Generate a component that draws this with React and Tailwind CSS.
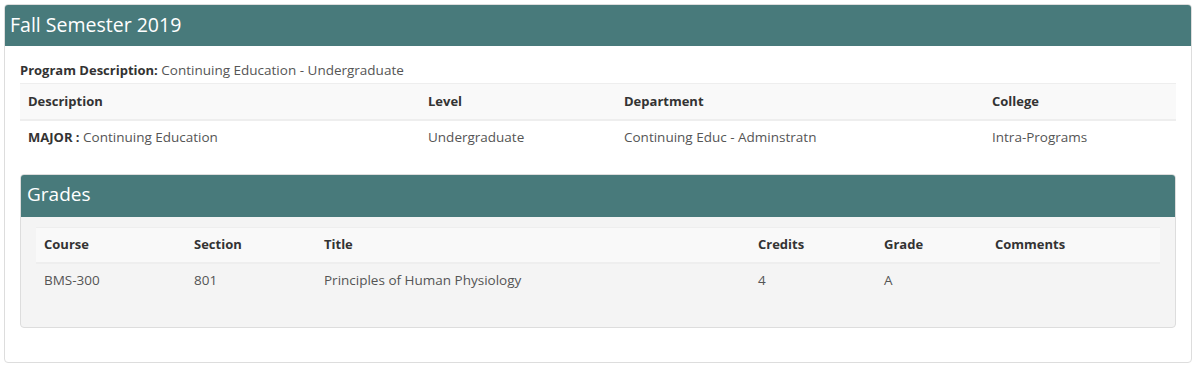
const programRows = [
  {
    description: "Continuing Education",
    level: "Undergraduate",
    department: "Continuing Educ - Adminstratn",
    college: "Intra-Programs",
  },
];

const grades = [
  {
    course: "BMS-300",
    section: "801",
    title: "Principles of Human Physiology",
    credits: "4",
    grade: "A",
    comments: "",
  },
];

const App = () => {
  return (
    <div className="bg-white pl-1 pr-2 pt-1 pb-1 font-['Open_Sans',sans-serif] text-[13.5px] text-[#555]">
      <div className="border border-[#ddd] rounded-[4px] overflow-hidden">
        <div className="bg-[#487a7b] h-[41px] flex items-center px-[5px] pb-[2px]">
          <h2 className="text-white text-[19.5px] leading-none">Fall Semester 2019</h2>
        </div>
        <div className="px-[15px] pt-[15px] pb-[34px]">
          <p className="leading-[18px] mb-[4px]">
            <span className="font-bold text-[13px] text-[#333]">Program Description:</span>{" "}
            Continuing Education - Undergraduate
          </p>
          <table className="w-full table-fixed border-collapse">
            <colgroup>
              <col className="w-[400px]" />
              <col className="w-[196px]" />
              <col className="w-[368px]" />
              <col />
            </colgroup>
            <thead>
              <tr className="bg-[#f9f9f9] border-t border-b-2 border-[#eee] h-[36px] text-left text-[13px]">
                <th className="px-2 font-bold text-[#333]">Description</th>
                <th className="px-2 font-bold text-[#333]">Level</th>
                <th className="px-2 font-bold text-[#333]">Department</th>
                <th className="px-2 font-bold text-[#333]">College</th>
              </tr>
            </thead>
            <tbody>
              {programRows.map((row) => (
                <tr key={row.description} className="h-[34px]">
                  <td className="px-2">
                    <span className="font-bold text-[13px] text-[#333]">MAJOR :</span> {row.description}
                  </td>
                  <td className="px-2">{row.level}</td>
                  <td className="px-2">{row.department}</td>
                  <td className="px-2">{row.college}</td>
                </tr>
              ))}
            </tbody>
          </table>

          <div className="mt-[20px] border border-[#ddd] rounded-[4px] overflow-hidden bg-[#f4f4f4]">
            <div className="bg-[#487a7b] h-[42px] flex items-center px-[6px] pb-[2px]">
              <h3 className="text-white text-[19px] leading-none">Grades</h3>
            </div>
            <div className="px-[15px] pt-[10px] pb-[30px]">
              <table className="w-full table-fixed border-collapse">
                <colgroup>
                  <col className="w-[150px]" />
                  <col className="w-[130px]" />
                  <col className="w-[434px]" />
                  <col className="w-[126px]" />
                  <col className="w-[111px]" />
                  <col />
                </colgroup>
                <thead>
                  <tr className="bg-[#f9f9f9] border-t border-b-2 border-[#eee] h-[36px] text-left text-[13px]">
                    <th className="px-2 font-bold text-[#333]">Course</th>
                    <th className="px-2 font-bold text-[#333]">Section</th>
                    <th className="px-2 font-bold text-[#333]">Title</th>
                    <th className="px-2 font-bold text-[#333]">Credits</th>
                    <th className="px-2 font-bold text-[#333]">Grade</th>
                    <th className="px-2 font-bold text-[#333]">Comments</th>
                  </tr>
                </thead>
                <tbody>
                  {grades.map((g) => (
                    <tr key={g.course} className="h-[34px]">
                      <td className="px-2">{g.course}</td>
                      <td className="px-2">{g.section}</td>
                      <td className="px-2">{g.title}</td>
                      <td className="px-2">{g.credits}</td>
                      <td className="px-2">{g.grade}</td>
                      <td className="px-2">{g.comments}</td>
                    </tr>
                  ))}
                </tbody>
              </table>
            </div>
          </div>
        </div>
      </div>
    </div>
  );
};

export default App;
